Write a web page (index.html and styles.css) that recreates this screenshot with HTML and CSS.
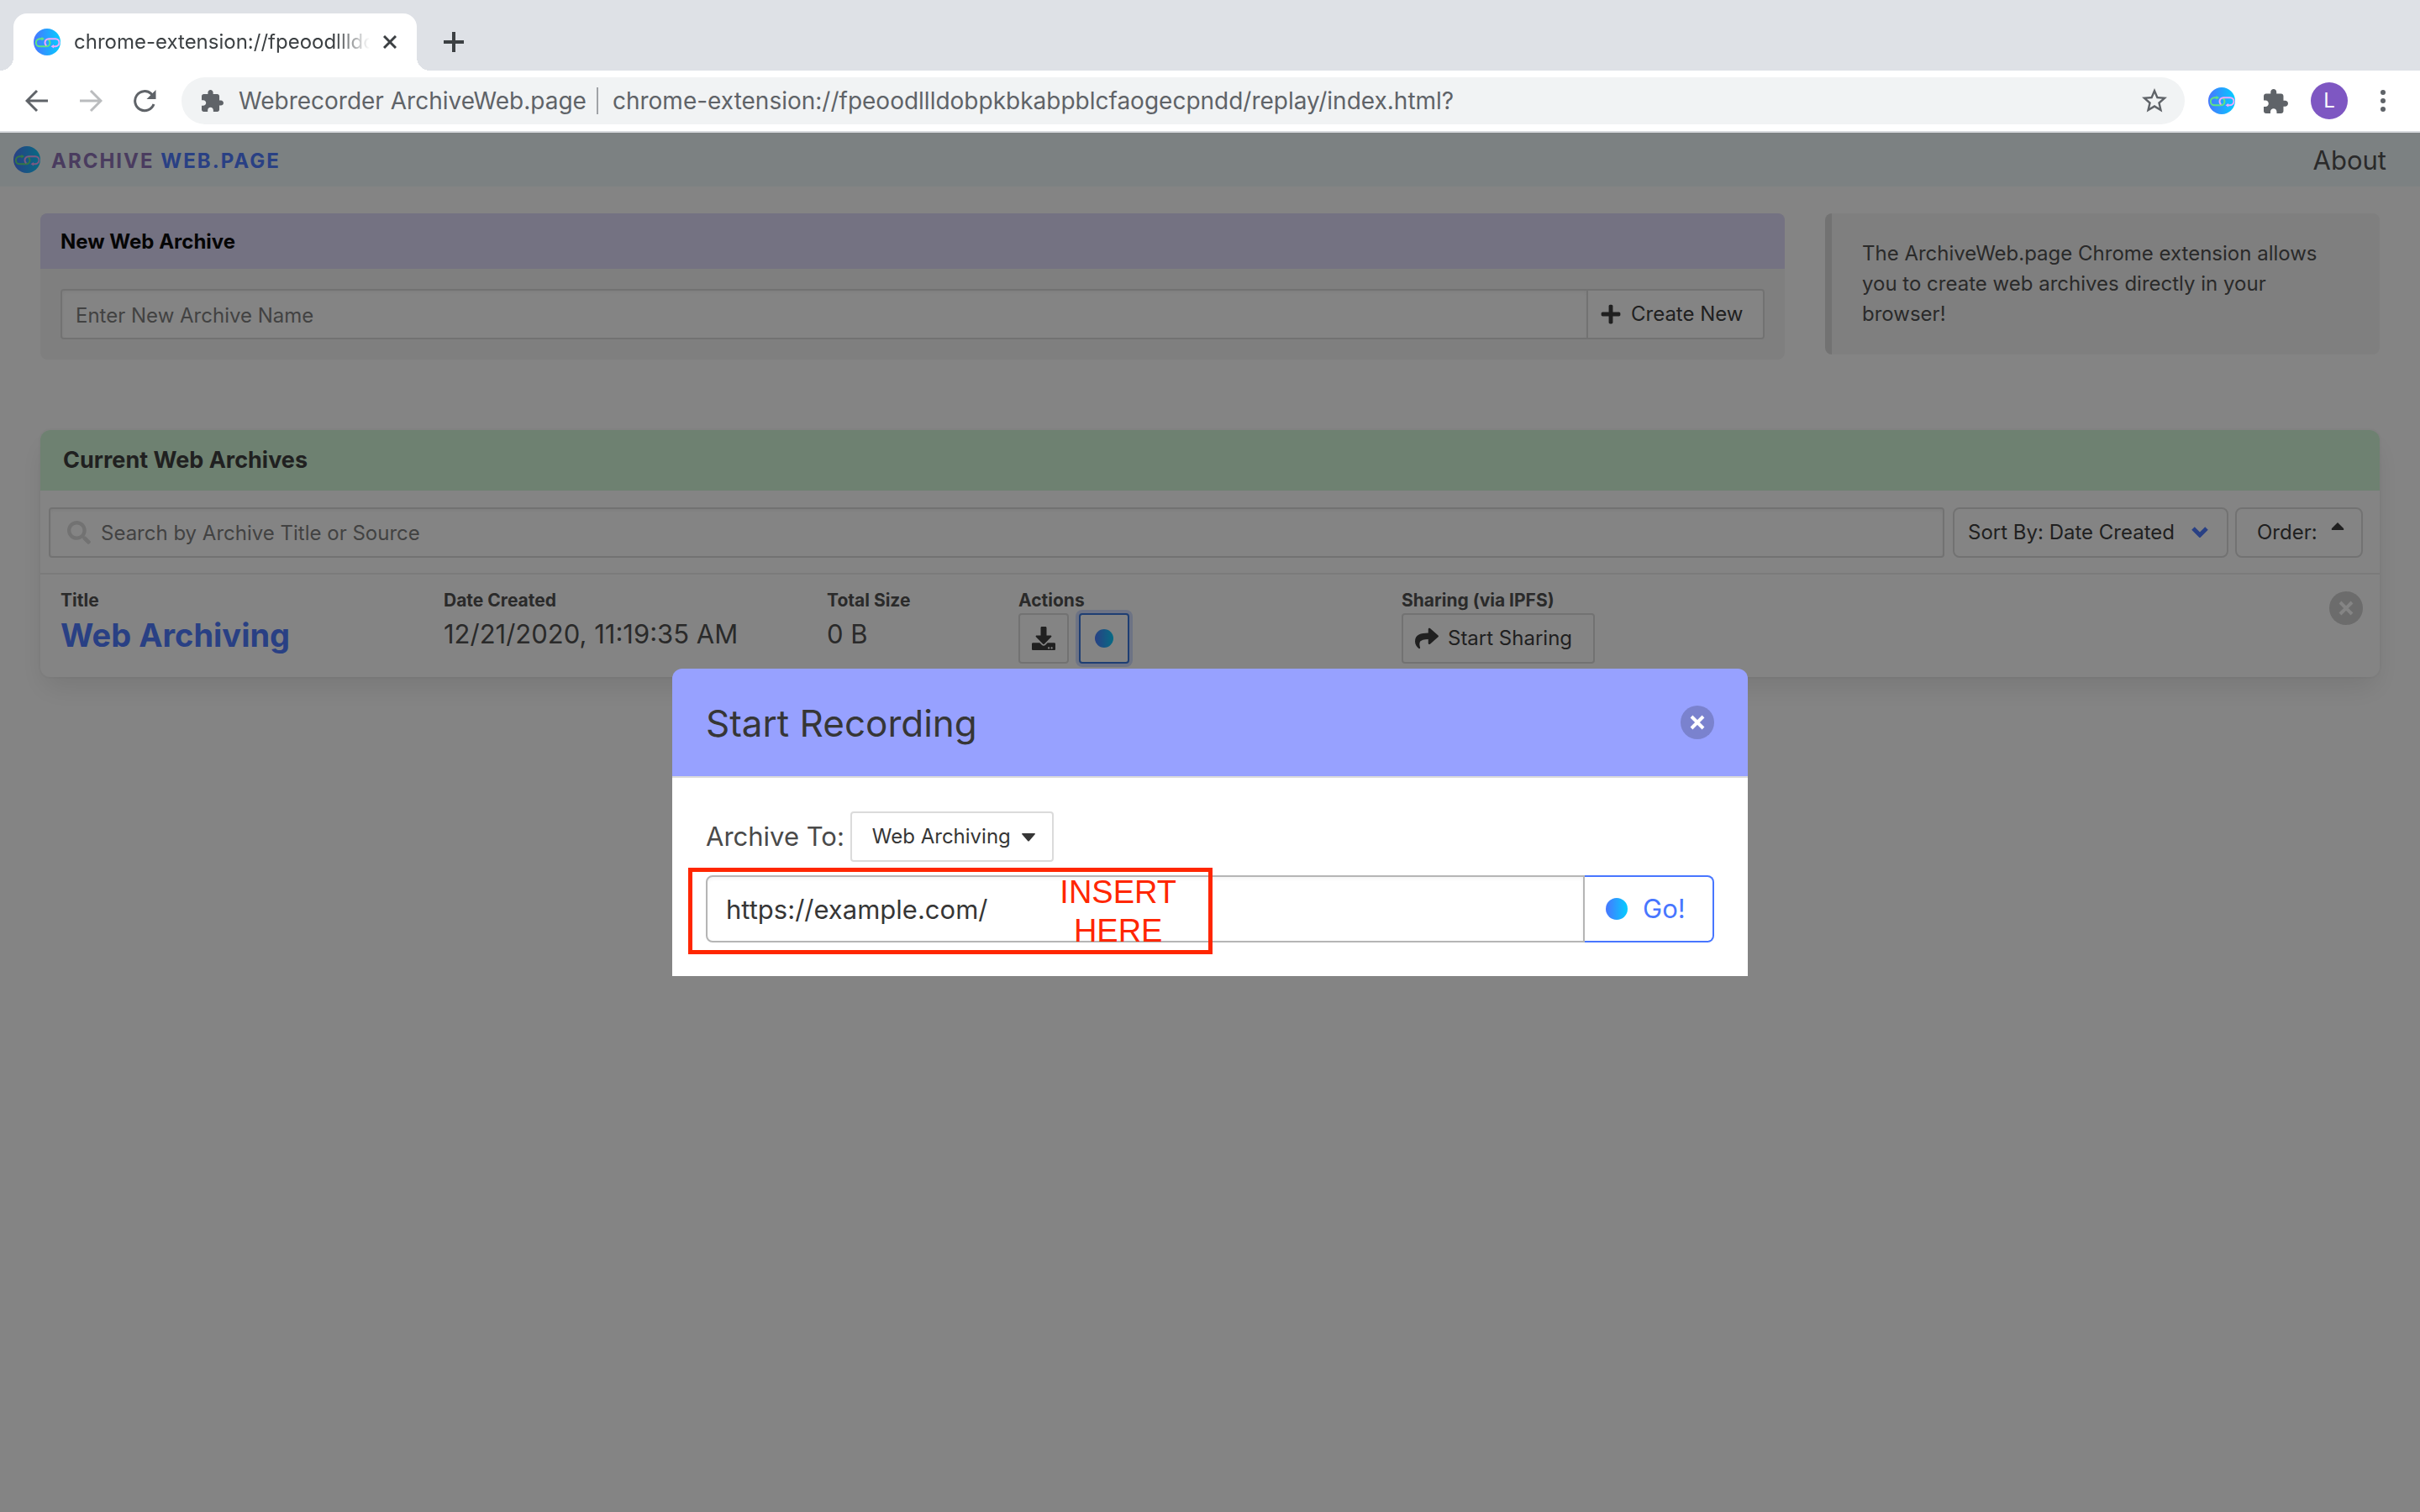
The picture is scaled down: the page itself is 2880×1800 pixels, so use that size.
FILE: index.html
```html
<!DOCTYPE html>
<html lang="en">
<head>
<meta charset="utf-8">
<title>Webrecorder ArchiveWeb.page</title>
<link rel="stylesheet" href="styles.css">
</head>
<body>
<svg class="defs" width="0" height="0" aria-hidden="true">
  <defs>
    <linearGradient id="blue" x1="0" x2="1" y1="0" y2="0">
      <stop offset="0" stop-color="#4876ff"/>
      <stop offset="1" stop-color="#04cdff"/>
    </linearGradient>
    <symbol id="logo" viewBox="0 0 32 32">
      <circle cx="16" cy="16" r="16" fill="url(#blue)"/>
      <g fill="none" stroke-width="2" stroke-linecap="round">
        <path stroke="#5fe582" d="M10.500 12.300H7.300a4.500 4.500 0 0 0 0 9H15a4.500 4.500 0 0 0 4.500-4.500c0-1.500-.6-2.600-1.600-3.400"/>
        <path stroke="#f0a8fb" d="M24 21.200h2a4.500 4.500 0 0 0 0-9h-8a4.500 4.500 0 0 0-4.500 4.500c0 1.200.4 2.200 1.200 3"/>
      </g>
      <path fill="#5fe582" d="M9.500 10l3.500 2.300-3.500 2.300z"/>
      <path fill="#f0a8fb" d="M24 18.900l-3.500 2.300 3.500 2.300z"/>
    </symbol>
    <symbol id="puzzle" viewBox="2 1 21 21">
      <path fill="currentColor" d="M20.500 11H19V7c0-1.100-.9-2-2-2h-4V3.500C13 2.120 11.880 1 10.500 1S8 2.120 8 3.500V5H4c-1.100 0-1.990.9-1.990 2v3.800H3.500c1.490 0 2.700 1.210 2.700 2.700s-1.210 2.700-2.700 2.700H2V20c0 1.100.9 2 2 2h3.800v-1.500c0-1.490 1.210-2.700 2.700-2.700 1.490 0 2.700 1.210 2.700 2.700V22H17c1.100 0 2-.9 2-2v-4h1.500c1.380 0 2.500-1.120 2.500-2.500S21.880 11 20.500 11z"/>
    </symbol>
    <symbol id="record" viewBox="0 0 20 20"><circle cx="10" cy="10" r="10" fill="url(#blue)"/></symbol>
    <symbol id="cross" viewBox="0 0 40 40"><path d="M13 13l14 14M27 13L13 27" stroke="#fff" stroke-width="4" fill="none"/></symbol>
  </defs>
</svg>

<header class="browser">
  <div class="tab-strip">
    <div class="tab">
      <svg class="logo"><use href="#logo"/></svg>
      <span class="tab-title">chrome-extension://fpeoodllldobpkbkabpblcfaogecpndd</span>
      <button class="plain" aria-label="Close tab">
        <svg width="16" height="16" viewBox="0 0 16 16"><path d="M1 1l14 14M15 1L1 15" stroke="#3c4043" stroke-width="3"/></svg>
      </button>
    </div>
    <button class="plain new-tab" aria-label="New tab">
      <svg width="24" height="24" viewBox="0 0 24 24"><path d="M12 0v24M0 12h24" stroke="#3c4043" stroke-width="4"/></svg>
    </button>
  </div>
  <div class="toolbar">
    <nav class="history">
      <button class="plain" aria-label="Back"><svg width="28" height="28" viewBox="0 0 28 28"><path d="M27 14H3M14 2L2 14l12 12" fill="none" stroke="#5f6368" stroke-width="3"/></svg></button>
      <button class="plain" aria-label="Forward"><svg width="28" height="28" viewBox="0 0 28 28"><path d="M1 14h24M14 2l12 12-12 12" fill="none" stroke="#babcbe" stroke-width="3"/></svg></button>
      <button class="plain" aria-label="Reload"><svg width="28" height="28" viewBox="0 0 28 28"><path d="M25 18A11.500 11.500 0 1 1 22 5.700L24 8" fill="none" stroke="#5f6368" stroke-width="3"/><path d="M27.500 1v11H16.500z" fill="#5f6368"/></svg></button>
    </nav>
    <div class="omnibox">
      <svg class="puzzle small"><use href="#puzzle"/></svg>
      <span class="site">Webrecorder ArchiveWeb.page</span>
      <span class="url">chrome-extension://fpeoodllldobpkbkabpblcfaogecpndd/replay/index.html?</span>
      <button class="plain" aria-label="Bookmark">
        <svg width="30" height="30" viewBox="2 2 20 20"><path fill="#5f6368" d="M22 9.240l-7.190-.62L12 2 9.190 8.630 2 9.240l5.460 4.730L5.820 21 12 17.270 18.180 21l-1.630-7.030L22 9.240zM12 15.400l-3.760 2.270 1-4.280-3.320-2.880 4.380-.38L12 6.100l1.710 4.040 4.380.38-3.320 2.880 1 4.280L12 15.400z"/></svg>
      </button>
    </div>
    <div class="extensions">
      <button class="plain" aria-label="ArchiveWeb.page"><svg class="logo"><use href="#logo"/></svg></button>
      <button class="plain" aria-label="Extensions"><svg class="puzzle"><use href="#puzzle"/></svg></button>
      <button class="plain avatar">L</button>
      <button class="plain" aria-label="Menu"><svg width="8" height="28" viewBox="0 0 8 28"><g fill="#5f6368"><circle cx="4" cy="4" r="3"/><circle cx="4" cy="14" r="3"/><circle cx="4" cy="24" r="3"/></g></svg></button>
    </div>
  </div>
</header>

<div class="viewport">
  <nav class="navbar">
    <a class="brand" href="#">
      <svg class="logo"><use href="#logo"/></svg>
      <span class="brand-name"><span class="brand-archive">ARCHIVE</span> <span class="brand-web">WEB.PAGE</span></span>
    </a>
    <a class="about" href="#about">About</a>
  </nav>

  <main class="content">
    <div class="intro">
      <section class="panel">
        <h2 class="panel-title">New Web Archive</h2>
        <form class="panel-body">
          <input class="field" type="text" placeholder="Enter New Archive Name" aria-label="Archive name">
          <button class="button create" type="button">
            <svg width="26" height="26" viewBox="0 0 448 512"><path fill="currentColor" d="M416 208H272V64c0-17.670-14.330-32-32-32h-32c-17.670 0-32 14.330-32 32v144H32c-17.670 0-32 14.330-32 32v32c0 17.670 14.330 32 32 32h144v144c0 17.670 14.330 32 32 32h32c17.670 0 32-14.330 32-32V304h144c17.670 0 32-14.330 32-32v-32c0-17.670-14.330-32-32-32z"/></svg>
            Create New
          </button>
        </form>
      </section>
      <aside class="info">The ArchiveWeb.page Chrome extension allows you to create web archives directly in your browser!</aside>
    </div>

    <section class="card">
      <h2 class="card-title">Current Web Archives</h2>
      <div class="filters">
        <div class="search">
          <svg width="28" height="28" viewBox="0 0 512 512"><path fill="#dbdbdb" d="M505 442.700L405.300 343c-4.500-4.500-10.600-7-17-7H372c27.600-35.300 44-79.700 44-128C416 93.100 322.900 0 208 0S0 93.100 0 208s93.100 208 208 208c48.300 0 92.700-16.400 128-44v16.300c0 6.400 2.500 12.500 7 17l99.700 99.700c9.400 9.400 24.600 9.400 33.900 0l28.300-28.300c9.400-9.400 9.400-24.600.1-34zM208 336c-70.700 0-128-57.200-128-128 0-70.700 57.200-128 128-128 70.700 0 128 57.200 128 128 0 70.700-57.200 128-128 128z"/></svg>
          <input class="field" type="text" placeholder="Search by Archive Title or Source" aria-label="Search archives">
        </div>
        <div class="select sort">
          <select aria-label="Sort by">
            <option>Sort By: Date Created</option>
            <option>Sort By: Title</option>
          </select>
          <svg width="20" height="14" viewBox="0 0 20 14"><path d="M2 3l8 8 8-8" fill="none" stroke="#4876ff" stroke-width="5"/></svg>
        </div>
        <button class="button order" type="button">Order:
          <svg width="16" height="20" viewBox="0 0 16 20"><path fill="currentColor" d="M8 2l7 7q1 2-1 2H2Q0 11 1 9z"/></svg>
        </button>
      </div>
      <div class="archive">
        <div class="wide"><h3>Title</h3><a class="archive-name" href="#archive">Web Archiving</a></div>
        <div class="wide"><h3>Date Created</h3><p>12/21/2020, 11:19:35 AM</p></div>
        <div><h3>Total Size</h3><p>0 B</p></div>
        <div class="wide">
          <h3>Actions</h3>
          <div class="actions">
            <button class="button square" aria-label="Download"><svg width="28" height="28" viewBox="0 0 512 512"><path fill="currentColor" d="M216 0h80c13.300 0 24 10.700 24 24v168h87.700c17.800 0 26.700 21.500 14.100 34.100L269.700 378.300c-7.500 7.500-19.800 7.500-27.300 0L90.100 226.100c-12.600-12.600-3.700-34.100 14.100-34.100H192V24c0-13.300 10.700-24 24-24zm296 376v112c0 13.300-10.700 24-24 24H24c-13.300 0-24-10.700-24-24V376c0-13.300 10.700-24 24-24h146.700l49 49c20.100 20.100 52.500 20.100 72.600 0l49-49H488c13.300 0 24 10.700 24 24zm-124 88c0-11-9-20-20-20s-20 9-20 20 9 20 20 20 20-9 20-20zm64 0c0-11-9-20-20-20s-20 9-20 20 9 20 20 20 20-9 20-20z"/></svg></button>
            <button class="button square active" aria-label="Record"><svg width="22" height="22"><use href="#record"/></svg></button>
          </div>
        </div>
        <div class="wide">
          <h3>Sharing (via IPFS)</h3>
          <button class="button share">
            <svg width="28" height="28" viewBox="0 0 512 512"><path fill="currentColor" d="M503.691 189.836L327.687 37.851C312.281 24.546 288 35.347 288 56.015v80.053C127.371 137.907 0 170.100 0 322.326c0 61.441 39.581 122.309 83.333 154.132 13.653 9.931 33.111-2.533 28.077-18.631C66.066 312.814 132.917 274.316 288 272.085V360c0 20.700 24.300 31.453 39.687 18.164l176.004-152c11.071-9.562 11.086-26.753 0-36.328z"/></svg>
            Start Sharing
          </button>
        </div>
        <div class="remove"><button class="plain delete" aria-label="Delete archive"><svg width="40" height="40"><use href="#cross"/></svg></button></div>
      </div>
    </section>
  </main>

  <div class="overlay">
    <section class="modal" role="dialog" aria-labelledby="modal-title">
      <header class="modal-head">
        <h2 id="modal-title">Start Recording</h2>
        <button class="plain delete" aria-label="Close"><svg width="40" height="40"><use href="#cross"/></svg></button>
      </header>
      <form class="modal-body">
        <div class="archive-to">
          <label for="target">Archive To:</label>
          <div class="select target">
            <select id="target"><option>Web Archiving</option></select>
            <svg width="16" height="10" viewBox="0 0 16 10"><path fill="#363636" d="M1 0h14q2 0 0 2L9 9q-1 1-2 0L1 2Q-1 0 1 0z"/></svg>
          </div>
        </div>
        <div class="record-row">
          <input class="record-url" type="text" value="https://example.com/" aria-label="URL to record">
          <button class="go" type="button"><svg width="26" height="26"><use href="#record"/></svg>Go!</button>
          <div class="callout"><span>INSERT<br>HERE</span></div>
        </div>
      </form>
    </section>
  </div>
</div>
</body>
</html>
```
FILE: styles.css
```css
* { box-sizing: border-box; }

body {
  margin: 0;
  min-height: 100vh;
  display: flex;
  flex-direction: column;
  background: #fff;
  color: #4a4a4a;
  font: 24px/36px Inter, "Liberation Sans", sans-serif;
}

h2, h3, p { margin: 0; }
a { color: inherit; text-decoration: none; }
svg { display: block; flex: none; }
.defs { position: absolute; }
input, select, button { font: inherit; color: inherit; }

.plain {
  display: block;
  padding: 0;
  border: 0;
  background: none;
}

.logo { width: 32px; height: 32px; }

/* Browser chrome */
.tab-strip {
  display: flex;
  height: 84px;
  padding: 16px 16px 0;
  background: #dee1e6;
}

.tab {
  position: relative;
  display: flex;
  align-items: center;
  width: 480px;
  padding: 0 24px;
  border-radius: 16px 16px 0 0;
  background: #fff;
}

.tab::before,
.tab::after {
  content: "";
  position: absolute;
  bottom: 0;
  width: 16px;
  height: 16px;
}

.tab::before { right: 100%; background: radial-gradient(circle at 0 0, transparent 16px, #fff 16px); }
.tab::after { left: 100%; background: radial-gradient(circle at 100% 0, transparent 16px, #fff 16px); }

.tab-title {
  flex: 1;
  margin: 0 16px;
  overflow: hidden;
  white-space: nowrap;
  color: #3c4043;
  -webkit-mask-image: linear-gradient(90deg, #000 88%, transparent);
  mask-image: linear-gradient(90deg, #000 88%, transparent);
}

.new-tab { margin-left: 32px; }

.toolbar {
  display: flex;
  align-items: center;
  height: 74px;
  padding: 0 40px 0 30px;
  border-bottom: 2px solid #d8dade;
}

.history { display: flex; gap: 36px; }

.omnibox {
  flex: 1;
  display: flex;
  align-items: center;
  height: 56px;
  margin: 0 28px 0 30px;
  padding: 0 21px 0 24px;
  border-radius: 28px;
  background: #f1f3f4;
  color: #5f6368;
  font-size: 28px;
}

.puzzle { width: 29px; height: 29px; color: #5f6368; }
.puzzle.small { width: 26px; height: 26px; }

.site {
  margin-left: 18px;
  padding-right: 12px;
  border-right: 2px solid #a0a3a7;
  line-height: 32px;
}

.url { flex: 1; margin-left: 17px; }

.extensions { display: flex; align-items: center; }
.extensions .puzzle { margin: 0 27px 0 34px; }

.avatar {
  width: 44px;
  height: 44px;
  margin-right: 38px;
  border-radius: 50%;
  background: #7e57c2;
  color: #fff;
  text-align: center;
}

/* Page */
.viewport {
  position: relative;
  flex: 1;
}

.navbar {
  display: flex;
  align-items: center;
  justify-content: space-between;
  height: 64px;
  padding: 0 40px 0 16px;
  background: #eff8fa;
}

.brand {
  display: flex;
  align-items: center;
  gap: 13px;
  font-weight: 700;
}

.brand-name { padding-top: 4px; letter-spacing: 2px; }
.brand-archive { color: #8a6eb4; }
.brand-web { color: #4876ff; }
.about { padding-top: 2px; font-size: 31px; }

.content { padding: 32px 48px; }

.intro {
  display: grid;
  grid-template-columns: 2076fr 660fr;
  align-items: start;
  gap: 48px;
  margin-bottom: 84px;
}

.panel {
  border-radius: 8px;
  overflow: hidden;
  background: #f5f5f5;
}

.panel-title {
  padding: 16px 24px 14px;
  background: #dedafa;
  color: #000;
  font-size: 24px;
  font-weight: 700;
}

.panel-body { display: flex; padding: 24px; }

.field {
  flex: 1;
  width: 100%;
  height: 60px;
  padding: 0 16px;
  border: 2px solid #dbdbdb;
  border-radius: 4px;
  background: #fff;
  box-shadow: inset 0 2px 4px rgba(10, 10, 10, 0.05);
}

.field::placeholder { color: #7a7a7a; opacity: 1; }

.button {
  display: flex;
  align-items: center;
  justify-content: center;
  height: 60px;
  border: 2px solid #dbdbdb;
  border-radius: 4px;
  background: #fff;
  color: #363636;
}

.panel .field { padding-top: 2px; border-radius: 4px 0 0 4px; }

.create {
  justify-content: flex-start;
  gap: 11px;
  width: 210px;
  padding: 0 14px;
  border-left: 0;
  border-radius: 0 4px 4px 0;
}

.info {
  padding: 30px 36px;
  border-left: 8px solid #dbdbdb;
  border-radius: 8px;
  background: #f5f5f5;
}

.card {
  border-radius: 12px;
  background: #fff;
  box-shadow: 0 16px 32px -4px rgba(10, 10, 10, 0.1), 0 0 0 2px rgba(10, 10, 10, 0.02);
}

.card-title {
  padding: 18px 27px;
  border-radius: 12px 12px 0 0;
  background: #d2f8d8;
  color: #363636;
  font-size: 27px;
  font-weight: 700;
}

.filters {
  display: flex;
  padding: 20px 20px 18px 10px;
  border-bottom: 2px solid #ededed;
}

.search {
  position: relative;
  flex: 1;
  margin-right: 10px;
}

.search .field { padding-left: 60px; }

.search svg {
  position: absolute;
  left: 22px;
  top: 16px;
}

.select {
  position: relative;
  height: 60px;
}

.select select {
  width: 100%;
  height: 100%;
  border: 2px solid #dbdbdb;
  border-radius: 4px;
  background: #fff;
  color: #363636;
  appearance: none;
}

.select svg {
  position: absolute;
  right: 22px;
  top: 22px;
  pointer-events: none;
}

.sort { width: 328px; margin-right: 8px; }
.sort select { padding: 0 16px; border-radius: 8px; }
.sort svg { right: 24px; }

.order {
  justify-content: flex-start;
  gap: 16px;
  width: 152px;
  padding: 0 24px;
  border-radius: 8px;
}

.order svg { align-self: start; margin-top: 14px; }

.archive {
  display: grid;
  grid-template-columns: repeat(12, 1fr);
  padding: 16px 24px;
}

.wide { grid-column: span 2; }

.archive h3 {
  font-size: 21px;
  line-height: 30px;
  font-weight: 700;
}

.archive > div { min-height: 90px; }
.archive p { font-size: 31px; line-height: 50px; }

.archive-name {
  display: block;
  color: #4876ff;
  font-size: 38px;
  line-height: 52px;
  font-weight: 700;
}

.actions { display: flex; gap: 12px; }
.square { width: 60px; padding: 0; }
.active { border-color: #3273dc; box-shadow: 0 0 0 4px rgba(72, 118, 255, 0.25); }

.share {
  justify-content: flex-start;
  gap: 11px;
  width: 230px;
  padding: 0 14px;
}

.remove {
  grid-column: 12;
  justify-self: end;
  margin-right: -4px;
  padding-top: 4px;
}

.delete {
  width: 40px;
  height: 40px;
  border-radius: 50%;
  background: rgba(10, 10, 10, 0.2);
}

/* Recording dialog */
.overlay {
  position: absolute;
  inset: 0;
  display: grid;
  place-items: center;
  background: rgba(10, 10, 10, 0.5);
}

.modal { width: 1280px; max-width: 100%; }

.modal-head {
  display: flex;
  align-items: center;
  justify-content: space-between;
  height: 130px;
  padding: 0 40px;
  border-bottom: 2px solid #dbdbdb;
  border-radius: 12px 12px 0 0;
  background: #97a1ff;
  color: #363636;
}

.modal-head h2 {
  padding-top: 2px;
  font-size: 44px;
  line-height: 56px;
  font-weight: 400;
}

.modal-body {
  padding: 40px;
  background: #fff;
  font-size: 31px;
}

.archive-to {
  display: flex;
  align-items: center;
  gap: 7px;
  margin-bottom: 16px;
}

.target { width: 242px; font-size: 24px; }
.target select { padding: 0 24px; }
.target svg { top: 26px; }

.record-row { position: relative; display: flex; }

.record-url {
  flex: 1;
  height: 80px;
  padding: 0 22px;
  border: 2px solid #b5b5b5;
  border-radius: 8px 0 0 8px;
  color: #363636;
  box-shadow: inset 0 2px 4px rgba(10, 10, 10, 0.05);
}

.go {
  display: flex;
  align-items: center;
  gap: 18px;
  width: 154px;
  padding: 0 25px;
  border: 2px solid #4876ff;
  border-left: 0;
  border-radius: 0 8px 8px 0;
  background: #fff;
  color: #4876ff;
}

.callout {
  position: absolute;
  left: -21px;
  top: -9px;
  display: flex;
  justify-content: flex-end;
  align-items: center;
  width: 624px;
  height: 103px;
  padding-right: 38px;
  border: 5px solid #ff2600;
  color: #ff2600;
  font: 38px/46px "Liberation Sans", sans-serif;
  text-align: center;
  pointer-events: none;
}
```
